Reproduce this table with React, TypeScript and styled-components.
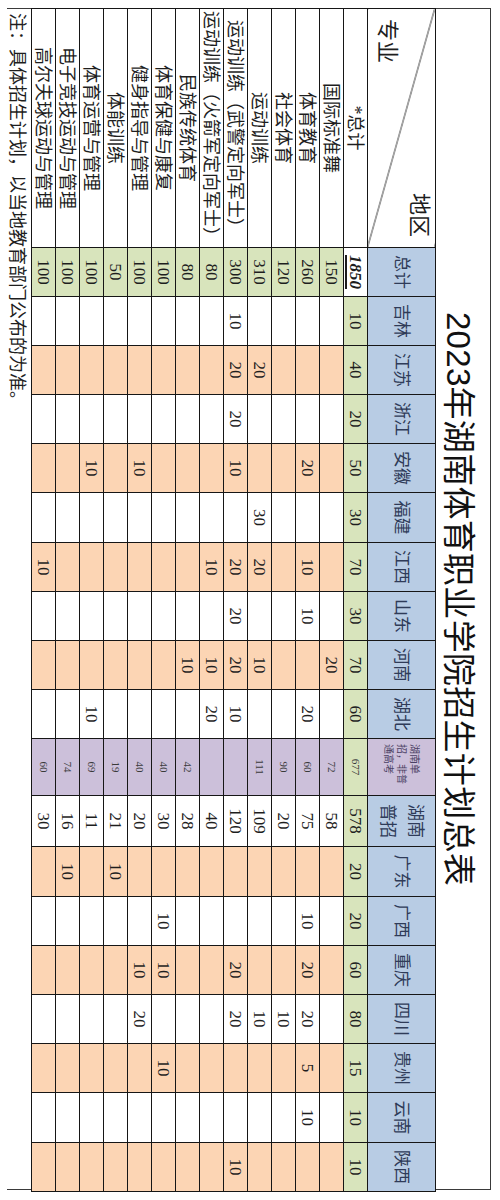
import React from 'react';
import styled, { createGlobalStyle } from 'styled-components';

type Tone = 'white' | 'green' | 'orange' | 'purple' | 'blue';

const TONES: Record<Tone, string> = {
  white: '#ffffff',
  green: '#d8e4bc',
  orange: '#fcd5b4',
  purple: '#ccc0da',
  blue: '#b8cce4',
};

const REGIONS: { name: string; tone: Tone; width: number }[] = [
  { name: '吉林', tone: 'white', width: 49 },
  { name: '江苏', tone: 'orange', width: 49 },
  { name: '浙江', tone: 'white', width: 49 },
  { name: '安徽', tone: 'orange', width: 49 },
  { name: '福建', tone: 'white', width: 50 },
  { name: '江西', tone: 'orange', width: 49 },
  { name: '山东', tone: 'white', width: 49 },
  { name: '河南', tone: 'orange', width: 49 },
  { name: '湖北', tone: 'white', width: 49 },
  { name: '湖南单', tone: 'purple', width: 57 },
  { name: '湖南普', tone: 'white', width: 51 },
  { name: '广东', tone: 'orange', width: 50 },
  { name: '广西', tone: 'white', width: 49 },
  { name: '重庆', tone: 'orange', width: 49 },
  { name: '四川', tone: 'white', width: 49 },
  { name: '贵州', tone: 'orange', width: 49 },
  { name: '云南', tone: 'white', width: 50 },
  { name: '陕西', tone: 'orange', width: 49 },
];

const TOTALS: Record<string, number> = {
  吉林: 10, 江苏: 40, 浙江: 20, 安徽: 50, 福建: 30, 江西: 70, 山东: 30, 河南: 70, 湖北: 60,
  湖南单: 677, 湖南普: 578, 广东: 20, 广西: 20, 重庆: 60, 四川: 80, 贵州: 15, 云南: 10, 陕西: 10,
};

const MAJORS: { label: string; total: number; plan: Record<string, number> }[] = [
  { label: '国际标准舞', total: 150, plan: { 河南: 20, 湖南单: 72, 湖南普: 58 } },
  {
    label: '体育教育',
    total: 260,
    plan: { 安徽: 20, 江西: 10, 山东: 10, 湖北: 20, 湖南单: 60, 湖南普: 75, 广西: 10, 重庆: 20, 四川: 20, 贵州: 5, 云南: 10 },
  },
  { label: '社会体育', total: 120, plan: { 湖南单: 90, 湖南普: 20, 四川: 10 } },
  { label: '运动训练', total: 310, plan: { 江苏: 20, 福建: 30, 江西: 20, 河南: 10, 湖南单: 111, 湖南普: 109, 四川: 10 } },
  {
    label: '运动训练（武警定向军士）',
    total: 300,
    plan: { 吉林: 10, 江苏: 20, 浙江: 20, 安徽: 10, 江西: 20, 山东: 20, 河南: 20, 湖北: 10, 湖南普: 120, 重庆: 20, 四川: 20, 陕西: 10 },
  },
  { label: '运动训练（火箭军定向军士）', total: 80, plan: { 江西: 10, 河南: 10, 湖北: 20, 湖南普: 40 } },
  { label: '民族传统体育', total: 80, plan: { 河南: 10, 湖南单: 42, 湖南普: 28 } },
  { label: '体育保健与康复', total: 100, plan: { 湖南单: 40, 湖南普: 30, 广西: 10, 重庆: 10, 贵州: 10 } },
  { label: '健身指导与管理', total: 100, plan: { 安徽: 10, 湖南单: 40, 湖南普: 20, 重庆: 10, 四川: 20 } },
  { label: '体能训练', total: 50, plan: { 湖南单: 19, 湖南普: 21, 广东: 10 } },
  { label: '体育运营与管理', total: 100, plan: { 安徽: 10, 湖北: 10, 湖南单: 69, 湖南普: 11 } },
  { label: '电子竞技运动与管理', total: 100, plan: { 湖南单: 74, 湖南普: 16, 广东: 10 } },
  { label: '高尔夫球运动与管理', total: 100, plan: { 江西: 10, 湖南单: 60, 湖南普: 30 } },
];

export default function App() {
  const renderHeadName = (name: string) => {
    if (name === '湖南单') {
      return (
        <SmallHead>
          湖南单
          <br />
          招，非普
          <br />
          通高考
        </SmallHead>
      );
    }
    if (name === '湖南普') {
      return (
        <>
          湖南
          <br />
          普招
        </>
      );
    }
    return name;
  };

  return (
    <Page>
      <GlobalStyle />
      <Sheet>
        <Frame>
          <Title>2023年湖南体育职业学院招生计划总表</Title>
          <Table>
            <colgroup>
              <col style={{ width: 239 }} />
              <col style={{ width: 49 }} />
              {REGIONS.map((r) => (
                <col key={r.name} style={{ width: r.width }} />
              ))}
            </colgroup>
            <tbody>
              <Row $h={68}>
                <CornerCell>
                  <CornerInner>
                    <CornerTop>地区</CornerTop>
                    <CornerBottom>专业</CornerBottom>
                  </CornerInner>
                </CornerCell>
                <HeadCell $tone="blue">总计</HeadCell>
                {REGIONS.map((r) => (
                  <HeadCell key={r.name} $tone={r.tone === 'purple' ? 'purple' : 'blue'}>
                    {renderHeadName(r.name)}
                  </HeadCell>
                ))}
              </Row>
              <Row $h={24}>
                <LabelCell>*总计</LabelCell>
                <Cell $tone="white">
                  <GrandTotal>1850</GrandTotal>
                </Cell>
                {REGIONS.map((r) => (
                  <Cell key={r.name} $tone="green" $small={r.tone === 'purple'}>
                    {TOTALS[r.name]}
                  </Cell>
                ))}
              </Row>
              {MAJORS.map((m) => (
                <Row key={m.label} $h={24}>
                  <LabelCell>{m.label}</LabelCell>
                  <Cell $tone="green">{m.total}</Cell>
                  {REGIONS.map((r) => (
                    <Cell key={r.name} $tone={r.tone} $small={r.tone === 'purple'}>
                      {m.plan[r.name] ?? ''}
                    </Cell>
                  ))}
                </Row>
              ))}
            </tbody>
          </Table>
          <Note>注：具体招生计划，以当地教育部门公布的为准。</Note>
        </Frame>
      </Sheet>
    </Page>
  );
}

const GlobalStyle = createGlobalStyle`
  html, body {
    margin: 0;
    padding: 0;
    background: #ffffff;
  }
`;

const Page = styled.div`
  position: relative;
  width: 500px;
  height: 1200px;
  overflow: hidden;
  background: #ffffff;
`;

/* the sheet is laid out landscape and turned a quarter clockwise */
const Sheet = styled.div`
  width: 1200px;
  height: 500px;
  box-sizing: border-box;
  padding: 9px 10px 8px 8px;
  transform-origin: 0 0;
  transform: translateX(500px) rotate(90deg);
  font-family: 'Liberation Serif', 'Noto Sans CJK SC', serif;
  color: #1e1e1e;
`;

const Frame = styled.div`
  height: 100%;
  border-top: 1px solid #3a3a3a;
  border-left: 1px solid #3a3a3a;
  border-right: 1px solid #3a3a3a;
  display: flex;
  flex-direction: column;
`;

const Title = styled.div`
  height: 54px;
  padding-top: 4px;
  box-sizing: border-box;
  display: flex;
  align-items: center;
  justify-content: center;
  font-family: 'Liberation Sans', 'Noto Sans CJK SC', sans-serif;
  font-size: 33px;
  color: #111111;
  letter-spacing: 0.3px;
`;

const Table = styled.table`
  width: 100%;
  table-layout: fixed;
  border-collapse: collapse;
  margin-left: -1px;
  width: calc(100% + 2px);
`;

const Row = styled.tr<{ $h: number }>`
  height: ${(p) => p.$h}px;
`;

const Cell = styled.td<{ $tone: Tone; $small?: boolean }>`
  border: 1px solid #161616;
  background: ${(p) => TONES[p.$tone]};
  padding: 0;
  text-align: center;
  vertical-align: middle;
  font-size: ${(p) => (p.$small ? '11px' : '17px')};
  line-height: 1;
  white-space: nowrap;
  color: ${(p) => (p.$small ? '#3a3a3a' : '#1e1e1e')};
`;

const HeadCell = styled(Cell)`
  font-size: 17px;
  line-height: 28px;
  color: ${(p) => (p.$tone === 'purple' ? '#4a3f63' : '#2f3b58')};
`;

const SmallHead = styled.div`
  font-size: 10px;
  line-height: 13px;
  text-align: left;
  padding-left: 5px;
  white-space: nowrap;
`;

const LabelCell = styled.td`
  border: 1px solid #161616;
  background: #ffffff;
  padding: 0;
  text-align: center;
  vertical-align: middle;
  font-size: 18px;
  line-height: 1;
  white-space: nowrap;
  overflow: hidden;
`;

const CornerCell = styled.td`
  border: 1px solid #161616;
  padding: 0;
  background: linear-gradient(
    to top right,
    transparent calc(50% - 0.8px),
    #1e1e1e 50%,
    transparent calc(50% + 0.8px)
  );
`;

const CornerInner = styled.div`
  height: 67px;
  box-sizing: border-box;
  padding: 5px 10px 8px 10px;
  display: flex;
  flex-direction: column;
  justify-content: space-between;
  font-size: 22px;
  line-height: 1;
`;

const CornerTop = styled.span`
  align-self: flex-end;
`;

const CornerBottom = styled.span`
  align-self: flex-start;
`;

const GrandTotal = styled.span`
  font-weight: bold;
  font-style: italic;
  font-size: 17px;
  text-decoration: underline;
  text-decoration-thickness: 2px;
  text-underline-offset: 3px;
`;

const Note = styled.div`
  height: 24px;
  padding-left: 4px;
  display: flex;
  align-items: center;
  font-size: 18px;
  color: #1e1e1e;
`;
